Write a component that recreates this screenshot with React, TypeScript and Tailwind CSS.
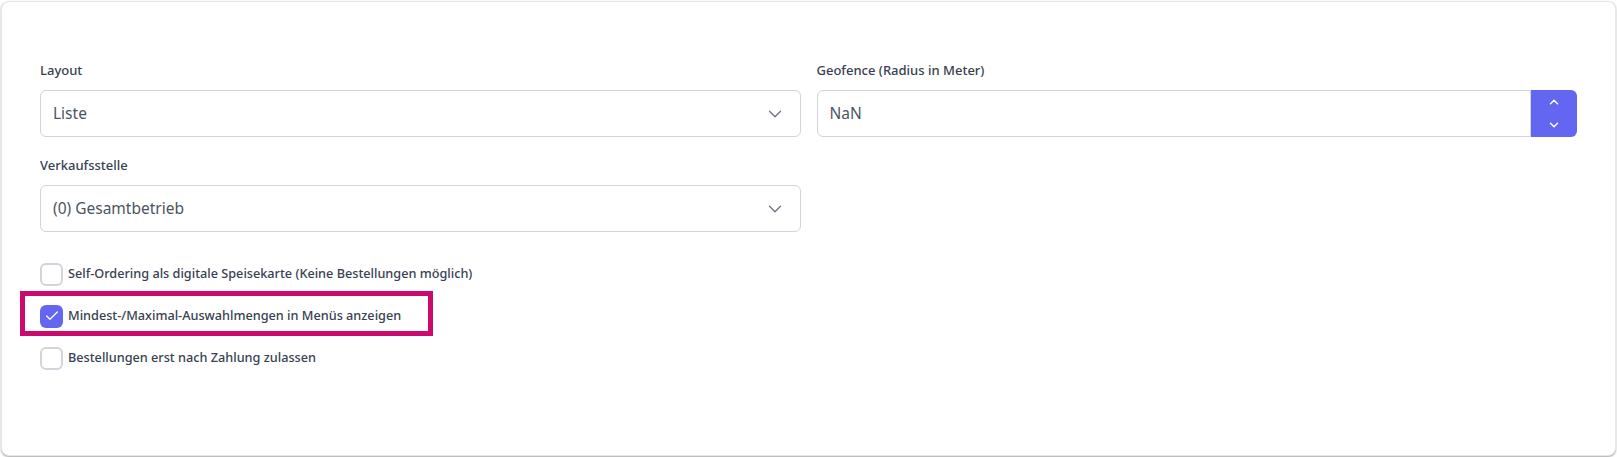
import React, { useState } from "react";
import { ChevronDown, ChevronUp, Check } from "lucide-react";

const font = { fontFamily: '"Noto Sans", "Open Sans", sans-serif' };

function Label({ children }: { children: React.ReactNode }) {
  return (
    <div className="mb-[10px] text-[13px] leading-5 font-medium text-[#374151]">
      {children}
    </div>
  );
}

function SelectBox({ value }: { value: string }) {
  return (
    <div className="flex h-[47px] items-center justify-between rounded-md border border-[#d1d5db] bg-white pl-3 pr-[14px]">
      <span className="text-[15.5px] text-[#4b5563]">{value}</span>
      <ChevronDown className="h-[22px] w-[22px] text-[#6b7280]" strokeWidth={1.4} />
    </div>
  );
}

function CheckRow({
  label,
  checked,
  onToggle,
  highlight,
}: {
  label: string;
  checked: boolean;
  onToggle: () => void;
  highlight?: boolean;
}) {
  return (
    <label className="relative flex h-6 cursor-pointer items-center gap-[5px]">
      {highlight && (
        <span className="pointer-events-none absolute -top-[13px] -left-5 h-[45px] w-[413px] border-[5px] border-[#cc0a6e]" />
      )}
      <span
        onClick={onToggle}
        className={
          checked
            ? "flex h-[23px] w-[23px] items-center justify-center rounded-md bg-[#6366f1]"
            : "flex h-[23px] w-[23px] items-center justify-center rounded-md border-2 border-[#d1d5db] bg-white"
        }
      >
        {checked && <Check className="h-4 w-4 text-white" strokeWidth={2} />}
      </span>
      <span className="text-[12.7px] font-medium text-[#374151]">{label}</span>
    </label>
  );
}

export default function App() {
  const [checks, setChecks] = useState([false, true, false]);
  const toggle = (i: number) =>
    setChecks((c) => c.map((v, j) => (j === i ? !v : v)));

  return (
    <div className="bg-white p-px" style={font}>
      <div className="h-[455px] w-[1615px] rounded-lg border border-[#e5e7eb] bg-white px-[38px] pt-[58px] shadow-[0_1px_2px_rgba(0,0,0,0.35)]">
        <div className="grid grid-cols-2 gap-x-[16px] gap-y-[18px]">
          <div>
            <Label>Layout</Label>
            <SelectBox value="Liste" />
          </div>
          <div>
            <Label>Geofence (Radius in Meter)</Label>
            <div className="flex h-[47px]">
              <div className="flex flex-1 items-center rounded-l-md border border-[#d1d5db] bg-white px-3">
                <span className="text-[15.5px] text-[#4b5563]">NaN</span>
              </div>
              <div className="flex w-[46px] flex-col items-center justify-center gap-[9px] rounded-r-md bg-[#6366f1]">
                <ChevronUp className="h-3.5 w-3.5 text-white" strokeWidth={2.5} />
                <ChevronDown className="h-3.5 w-3.5 text-white" strokeWidth={2.5} />
              </div>
            </div>
          </div>
          <div>
            <Label>Verkaufsstelle</Label>
            <SelectBox value="(0) Gesamtbetrieb" />
          </div>
        </div>
        <div className="mt-[30px] flex flex-col gap-[18px]">
          <CheckRow
            label="Self-Ordering als digitale Speisekarte (Keine Bestellungen möglich)"
            checked={checks[0]}
            onToggle={() => toggle(0)}
          />
          <CheckRow
            label="Mindest-/Maximal-Auswahlmengen in Menüs anzeigen"
            checked={checks[1]}
            onToggle={() => toggle(1)}
            highlight
          />
          <CheckRow
            label="Bestellungen erst nach Zahlung zulassen"
            checked={checks[2]}
            onToggle={() => toggle(2)}
          />
        </div>
      </div>
    </div>
  );
}
